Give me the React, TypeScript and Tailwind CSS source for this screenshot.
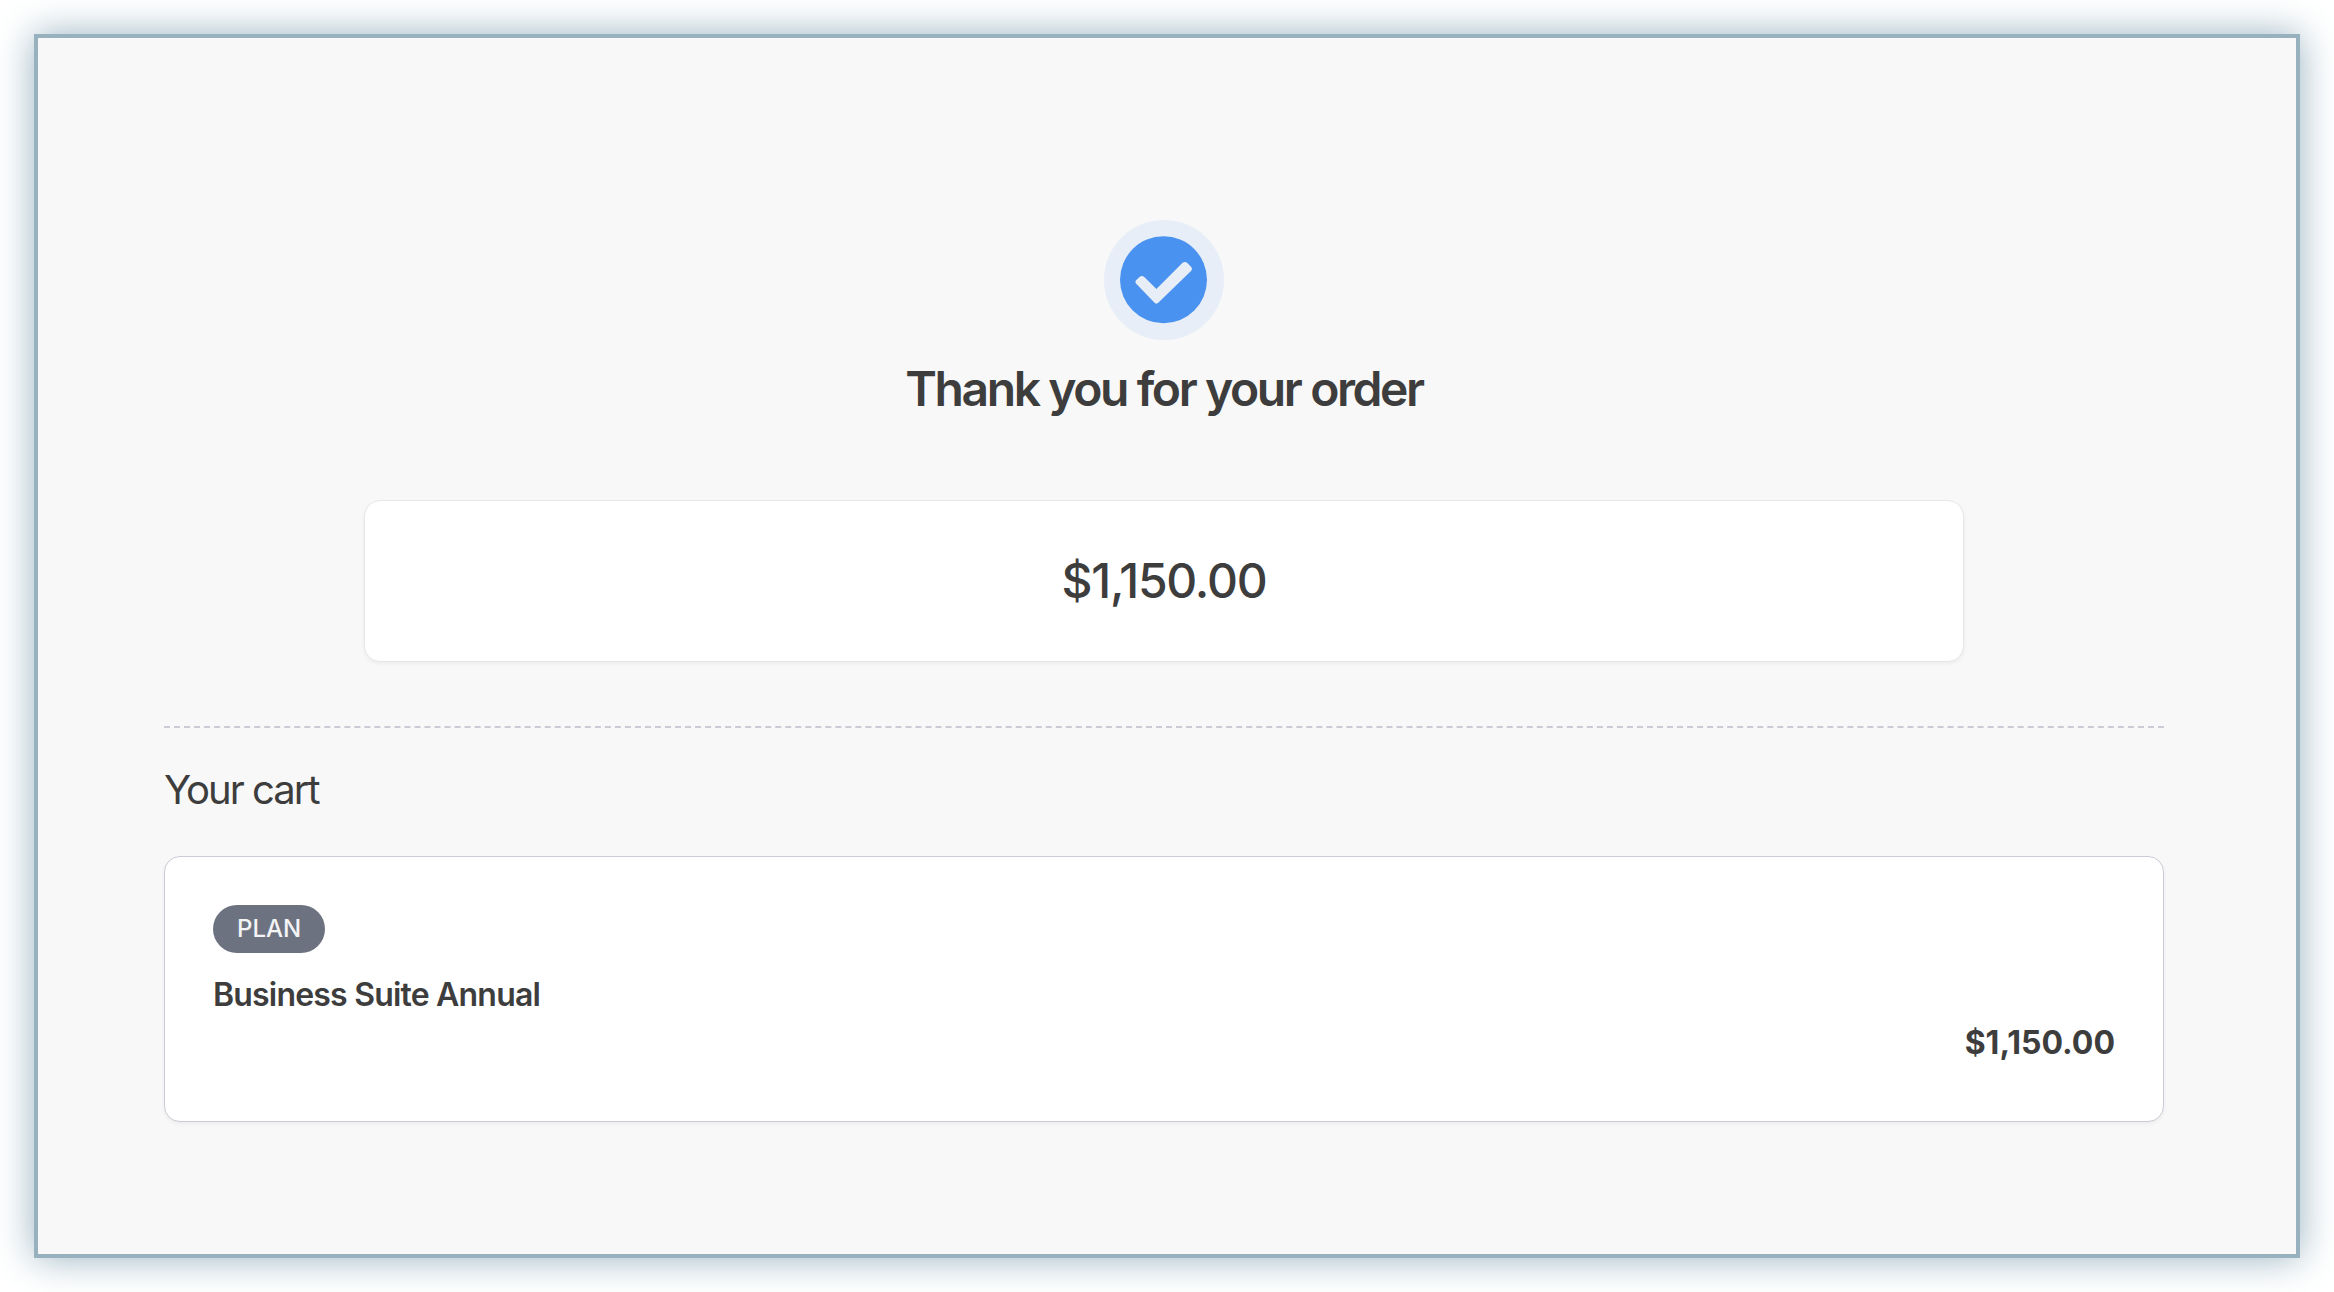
const items = [{ kind: "PLAN", name: "Business Suite Annual", price: "$1,150.00" }];

function CheckMark() {
  return (
    <div className="flex size-[120px] items-center justify-center rounded-full bg-[#e7eef8]">
      <svg viewBox="0 0 120 120" className="size-[120px]" role="img" aria-label="Order complete">
        <circle cx="59.5" cy="59.8" r="43.5" fill="#4a92ef" />
        <path
          d="M31.8 60.6 Q30.8 62.3 32 63.6 L50.3 82.6 Q52.4 84.8 54.5 82.6 L87 51 Q88.9 49 87 46.8 L83.6 43.2 Q81.2 40.9 78.6 42.8 L52.4 69 L40.3 56.9 Q38 55.2 35.8 56.7 Z"
          fill="#e7eef8"
        />
      </svg>
    </div>
  );
}

export default function App() {
  return (
    <div className="min-h-screen bg-white p-[34px] font-['Inter',sans-serif] text-[#3d3d3d]">
      <main className="flex min-h-[1224px] flex-col border-4 border-[#97b1bf] bg-[#f8f8f8] pt-[182px] pr-[132px] pb-[132px] pl-[126px] shadow-[0_0_36px_#97b1bf]">
        <header className="flex flex-col items-center">
          <CheckMark />
          <h1 className="mt-6 text-[48px] leading-[50px] font-semibold tracking-tighter">Thank you for your order</h1>
        </header>
        <section className="mx-[200px] mt-[86px] flex flex-col items-center rounded-2xl border border-[#e5e7eb] bg-white py-14 shadow-[0_2px_4px_rgba(0,0,0,0.05)]">
          <p className="text-[48px] leading-[48px] font-medium tracking-tight">$1,150.00</p>
        </section>
        <section className="mt-16 border-t-2 border-dashed border-[#cbcbd6] pt-9">
          <h2 className="text-[40px] leading-[52px] tracking-tighter">Your cart</h2>
          <ul className="mt-10">
            {items.map((item) => (
              <li
                key={item.name}
                className="rounded-2xl border border-[#cbcbd6] bg-white px-12 pt-12 pb-[54px] shadow-[0_2px_4px_rgba(0,0,0,0.05)]"
              >
                <span className="flex h-12 w-fit items-center rounded-full bg-[#6d7280] px-6 text-[24px] leading-[32px] font-medium text-[#f3f4f6]">
                  {item.kind}
                </span>
                <h3 className="mt-[18px] text-[32px] leading-[48px] font-semibold tracking-tight">{item.name}</h3>
                <p className="text-right text-[32px] leading-[48px] font-bold">{item.price}</p>
              </li>
            ))}
          </ul>
        </section>
      </main>
    </div>
  );
}
